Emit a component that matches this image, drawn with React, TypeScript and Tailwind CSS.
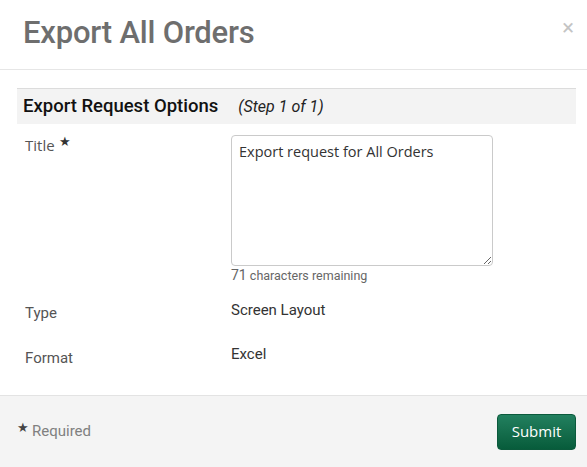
import React from "react";

function Star() {
  return <span className="relative -top-[5px] ml-[4px] text-[13px] text-[#333]">★</span>;
}

export default function App() {
  return (
    <div className="relative flex h-[467px] w-[587px] flex-col overflow-hidden bg-white font-['Roboto',sans-serif]">
      {/* header */}
      <div className="flex h-[70px] shrink-0 items-center border-b border-[#e6e6e6] pl-[23px]">
        <h1 className="-mt-[4px] text-[31px] font-medium leading-none tracking-[-0.2px] text-[#6e6e6e]">
          Export All Orders
        </h1>
      </div>
      <button className="absolute right-[13px] top-[17px] text-[22px] leading-none text-[#c4c4c4]">×</button>

      {/* body */}
      <div className="flex-1 pl-[17px] pr-[11px] pt-[18px]">
        <div className="flex h-[36px] items-center border-t border-[#dcdcdc] bg-[#f3f3f3] pl-[6px]">
          <span className="text-[18.5px] font-medium text-[#111]">Export Request Options</span>
          <span className="ml-[20px] text-[16px] italic text-[#222]">(Step 1 of 1)</span>
        </div>

        <div className="mt-[11px] grid grid-cols-[214px_1fr]">
          <div className="-mt-[1px] pl-[8px] font-['Open_Sans',sans-serif] text-[15px] text-[#555]">
            Title
            <Star />
          </div>
          <div>
            <textarea
              className="block h-[131px] w-[262px] resize-y rounded-[4px] border border-[#cacaca] px-[7px] py-[5px] font-['Open_Sans',sans-serif] text-[14.5px] leading-[22px] text-[#333] outline-none"
              defaultValue="Export request for All Orders"
            />
            <div className="mt-[1px] leading-[16px] text-[#666]">
              <span className="text-[14px]">71</span>
              <span className="text-[12.5px]"> characters remaining</span>
            </div>
          </div>

          <div className="pl-[8px] pt-[18px] text-[15px] text-[#555]">Type</div>
          <div className="pt-[15px] text-[15px] text-[#333]">Screen Layout</div>

          <div className="pl-[8px] pt-[22px] text-[15px] text-[#555]">Format</div>
          <div className="pt-[18px] text-[15px] text-[#333]">Excel</div>
        </div>
      </div>

      {/* footer */}
      <div className="flex h-[72px] shrink-0 items-center justify-between border-t border-[#e3e3e3] bg-[#f4f4f4] pl-[17px] pr-[11px]">
        <div className="text-[15px] text-[#808080]">
          <span className="relative -top-[4px] mr-[3px] text-[13px] text-[#444]">★</span>
          Required
        </div>
        <button className="h-[36px] w-[79px] rounded-[4px] border border-[#0b5a3c] bg-gradient-to-b from-[#22805f] to-[#075c3b] font-['Open_Sans',sans-serif] text-[15px] text-white">
          Submit
        </button>
      </div>
    </div>
  );
}
